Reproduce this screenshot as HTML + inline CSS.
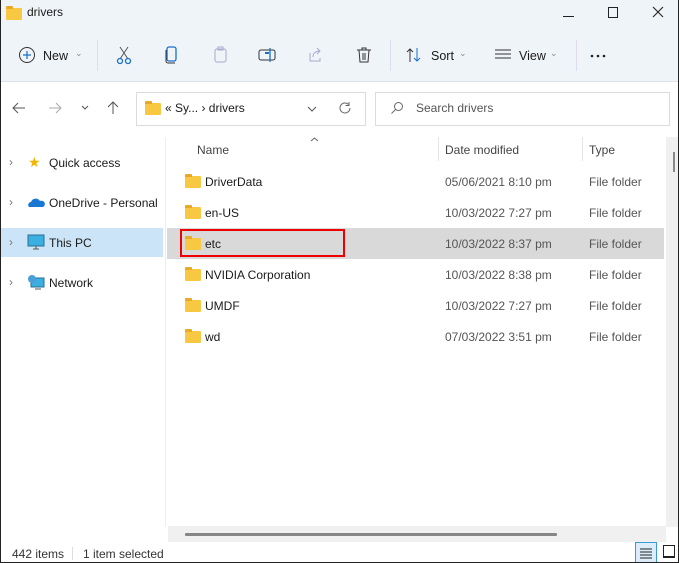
<!DOCTYPE html>
<html><head><style>
*{margin:0;padding:0;box-sizing:border-box}
body{width:679px;height:563px;overflow:hidden;background:#fff;font-family:"Liberation Sans",sans-serif;font-size:12px;color:#1a1a1a;position:relative}
.a{position:absolute}
.frame{position:absolute;left:0;top:0;width:679px;height:563px;border:1px solid #222;border-top:none;pointer-events:none}
.fold{position:absolute;width:16px;height:12px;background:#f8c843;border-radius:1px}
.fold:before{content:"";position:absolute;left:0;top:-2px;width:7px;height:3px;background:#e8a92a;border-radius:1px 1px 0 0}
.row{position:absolute;left:167px;width:497px;height:31px}
.row .n{position:absolute;left:38px;top:9px;font-size:12px}
.row .d{position:absolute;left:278px;top:9px;color:#555}
.row .t{position:absolute;left:422px;top:9px;color:#555}
.row .fold{left:18px;top:10px}
.nav{position:absolute;left:0;width:163px;height:29px;font-size:12px}
.nav .c{position:absolute;left:9px;top:7px;color:#777;font-size:12px}
.nav .l{position:absolute;left:49px;top:8px}
</style></head><body>
<div class="a" style="left:0;top:0;width:679px;height:82px;background:#eff4f9"></div>
<div class="a" style="left:0;top:81px;width:679px;height:1px;background:#dde2e8"></div>
<div class="fold" style="left:6px;top:8px"></div>
<div class="a" style="left:27px;top:5px;font-size:12px">drivers</div>
<div class="a" style="left:563px;top:16px;width:11px;height:1px;background:#222"></div>
<div class="a" style="left:608px;top:7px;width:10px;height:11px;border:1px solid #222"></div>
<svg class="a" style="left:652px;top:6px" width="12" height="12"><path d="M1 1l10 10M11 1L1 11" stroke="#222" stroke-width="1.1"/></svg>
<!-- toolbar -->
<svg class="a" style="left:18px;top:46px" width="18" height="18"><circle cx="9" cy="9" r="7.5" fill="none" stroke="#333"/><path d="M9 5v8M5 9h8" stroke="#1a6fc8" stroke-width="1.2"/></svg>
<div class="a" style="left:43px;top:49px;font-size:12.5px">New</div>
<div class="a" style="left:75px;top:48px;font-size:9px;color:#888">⌄</div>
<div class="a" style="left:97px;top:40px;width:1px;height:31px;background:#dde"></div>
<svg class="a" style="left:115px;top:45px" width="18" height="20"><path d="M5 2l8 12M13 2L5 14" stroke="#555" fill="none"/><circle cx="5" cy="16" r="2.5" fill="none" stroke="#1a6fc8" stroke-width="1.3"/><circle cx="13" cy="16" r="2.5" fill="none" stroke="#1a6fc8" stroke-width="1.3"/></svg>
<svg class="a" style="left:163px;top:45px" width="18" height="20"><rect x="4" y="2" width="9" height="14" rx="2" fill="none" stroke="#1a6fc8" stroke-width="1.3"/><path d="M3 5v11a2 2 0 0 0 2 2h7" stroke="#333" fill="none"/></svg>
<svg class="a" style="left:211px;top:45px" width="18" height="20"><rect x="4" y="4" width="11" height="13" rx="2" fill="none" stroke="#aac"/><rect x="7" y="2" width="5" height="3" fill="none" stroke="#aac"/></svg>
<svg class="a" style="left:257px;top:45px" width="20" height="20"><rect x="2" y="5" width="16" height="10" rx="2" fill="none" stroke="#333"/><path d="M8 8h4" stroke="#1a6fc8" stroke-width="2"/><path d="M13 3v14" stroke="#1a6fc8" stroke-width="1.3"/></svg>
<svg class="a" style="left:306px;top:45px" width="18" height="20"><path d="M4 8v8h10v-3" stroke="#aac" fill="none"/><path d="M7 12c0-4 3-6 7-6M11 3l3 3-3 3" stroke="#aac" fill="none"/></svg>
<svg class="a" style="left:355px;top:45px" width="18" height="20"><path d="M2 5h14M7 5V3h4v2M4 5l1 12h8l1-12M8 8v7M10 8v7" stroke="#333" fill="none"/></svg>
<div class="a" style="left:390px;top:40px;width:1px;height:31px;background:#dde"></div>
<svg class="a" style="left:405px;top:46px" width="18" height="18"><path d="M5 16V3M2 6l3-3 3 3" stroke="#333" fill="none"/><path d="M12 2v13M9 12l3 3 3-3" stroke="#1a6fc8" fill="none"/></svg>
<div class="a" style="left:431px;top:49px;font-size:12.5px">Sort</div>
<div class="a" style="left:459px;top:48px;font-size:9px;color:#888">⌄</div>
<svg class="a" style="left:494px;top:48px" width="18" height="14"><path d="M1 2h16M1 6h16M1 10h16" stroke="#333"/></svg>
<div class="a" style="left:519px;top:49px;font-size:12.5px">View</div>
<div class="a" style="left:550px;top:48px;font-size:9px;color:#888">⌄</div>
<div class="a" style="left:576px;top:40px;width:1px;height:31px;background:#dde"></div>
<svg class="a" style="left:590px;top:54px" width="18" height="4"><circle cx="2" cy="2" r="1.3" fill="#222"/><circle cx="8" cy="2" r="1.3" fill="#222"/><circle cx="14" cy="2" r="1.3" fill="#222"/></svg>
<!-- nav row -->
<svg class="a" style="left:12px;top:102px" width="14" height="12"><path d="M13 6H1M6 1L1 6l5 5" stroke="#555" fill="none"/></svg>
<svg class="a" style="left:48px;top:102px" width="14" height="12"><path d="M1 6h12M8 1l5 5-5 5" stroke="#aaa" fill="none"/></svg>
<svg class="a" style="left:81px;top:105px" width="8" height="5"><path d="M1 1l3 3 3-3" stroke="#555" fill="none"/></svg>
<svg class="a" style="left:107px;top:101px" width="12" height="14"><path d="M6 13V1M1 6l5-5 5 5" stroke="#555" fill="none"/></svg>
<div class="a" style="left:136px;top:92px;width:230px;height:34px;border:1px solid #dcdcdc;background:#fff"></div>
<div class="fold" style="left:145px;top:103px"></div>
<div class="a" style="left:165px;top:101px;font-size:12px">« Sy... › drivers</div>
<svg class="a" style="left:307px;top:106px" width="10" height="6"><path d="M1 1l4 4 4-4" stroke="#555" fill="none"/></svg>
<svg class="a" style="left:338px;top:101px" width="14" height="14"><path d="M12 7a5 5 0 1 1-1.5-3.6M11 1v3.5H7.5" stroke="#666" fill="none"/></svg>
<div class="a" style="left:375px;top:92px;width:295px;height:34px;border:1px solid #dcdcdc;background:#fff"></div>
<svg class="a" style="left:390px;top:101px" width="14" height="14"><circle cx="8.5" cy="5.5" r="4" fill="none" stroke="#666"/><path d="M5.5 8.5L1.5 12.5" stroke="#666"/></svg>
<div class="a" style="left:416px;top:101px;color:#555">Search drivers</div>
<!-- sidebar -->
<div class="a" style="left:165px;top:137px;width:1px;height:390px;background:#eee"></div>
<div class="nav" style="top:148px"><span class="c">›</span><span class="a" style="left:28px;top:6px;color:#f5b400;font-size:14px">★</span><span class="l">Quick access</span></div>
<div class="nav" style="top:188px"><span class="c">›</span><svg class="a" style="left:27px;top:8px" width="18" height="12"><path d="M2 11a3 3 0 0 1 2-5 5 5 0 0 1 9-1 3 3 0 0 1 3 6z" fill="#1a78d4"/></svg><span class="l">OneDrive - Personal</span></div>
<div class="nav" style="top:228px;background:#cce4f7"><span class="c">›</span><svg class="a" style="left:27px;top:6px" width="18" height="16"><rect x="1" y="1" width="16" height="11" fill="#3bb0e0" stroke="#2a6f90"/><path d="M6 15h6M9 12v3" stroke="#555"/></svg><span class="l">This PC</span></div>
<div class="nav" style="top:268px"><span class="c">›</span><svg class="a" style="left:27px;top:6px" width="18" height="16"><rect x="4" y="4" width="13" height="9" fill="#3bb0e0" stroke="#2a6f90"/><circle cx="5" cy="5" r="4" fill="#4a9fd8"/><path d="M8 15h6" stroke="#555"/></svg><span class="l">Network</span></div>
<!-- header -->
<svg class="a" style="left:310px;top:137px" width="9" height="5"><path d="M1 4l3.5-3 3.5 3" stroke="#666" fill="none"/></svg>
<div class="a" style="left:197px;top:143px;color:#444">Name</div>
<div class="a" style="left:438px;top:137px;width:1px;height:24px;background:#e5e5e5"></div>
<div class="a" style="left:445px;top:143px;color:#444">Date modified</div>
<div class="a" style="left:582px;top:137px;width:1px;height:24px;background:#e5e5e5"></div>
<div class="a" style="left:589px;top:143px;color:#444">Type</div>
<div class="a" style="left:666px;top:137px;width:12px;height:390px;background:#f0f0f0"></div>
<div class="a" style="left:673px;top:152px;width:2px;height:20px;background:#888"></div>
<div class="row" style="top:166px"><div class="fold"></div><span class="n">DriverData</span><span class="d">05/06/2021 8:10 pm</span><span class="t">File folder</span></div>
<div class="row" style="top:197px"><div class="fold"></div><span class="n">en-US</span><span class="d">10/03/2022 7:27 pm</span><span class="t">File folder</span></div>
<div class="row" style="top:228px;background:#d9d9d9"><div class="fold"></div><span class="n">etc</span><span class="d">10/03/2022 8:37 pm</span><span class="t">File folder</span></div>
<div class="a" style="left:180px;top:229px;width:165px;height:28px;border:2px solid #e00"></div>
<div class="row" style="top:259px"><div class="fold"></div><span class="n">NVIDIA Corporation</span><span class="d">10/03/2022 8:38 pm</span><span class="t">File folder</span></div>
<div class="row" style="top:290px"><div class="fold"></div><span class="n">UMDF</span><span class="d">10/03/2022 7:27 pm</span><span class="t">File folder</span></div>
<div class="row" style="top:321px"><div class="fold"></div><span class="n">wd</span><span class="d">07/03/2022 3:51 pm</span><span class="t">File folder</span></div>
<!-- hscroll -->
<div class="a" style="left:168px;top:526px;width:498px;height:16px;background:#f0f0f0"></div>
<div class="a" style="left:185px;top:533px;width:372px;height:3px;background:#858585;border-radius:1px"></div>
<!-- status -->
<div class="a" style="left:12px;top:547px;color:#333">442 items</div>
<div class="a" style="left:72px;top:547px;width:1px;height:13px;background:#ddd"></div>
<div class="a" style="left:83px;top:547px;color:#333">1 item selected</div>
<div class="a" style="left:635px;top:542px;width:22px;height:21px;border:1px solid #3a9ad9;background:#dcecfa"></div>
<svg class="a" style="left:639px;top:547px" width="14" height="12"><path d="M1 2h12M1 5h12M1 8h12M1 11h12" stroke="#222"/></svg>
<div class="a" style="left:663px;top:545px;width:12px;height:13px;border:1px solid #222;border-bottom-width:2px"></div>
<div class="frame"></div>
</body></html>
